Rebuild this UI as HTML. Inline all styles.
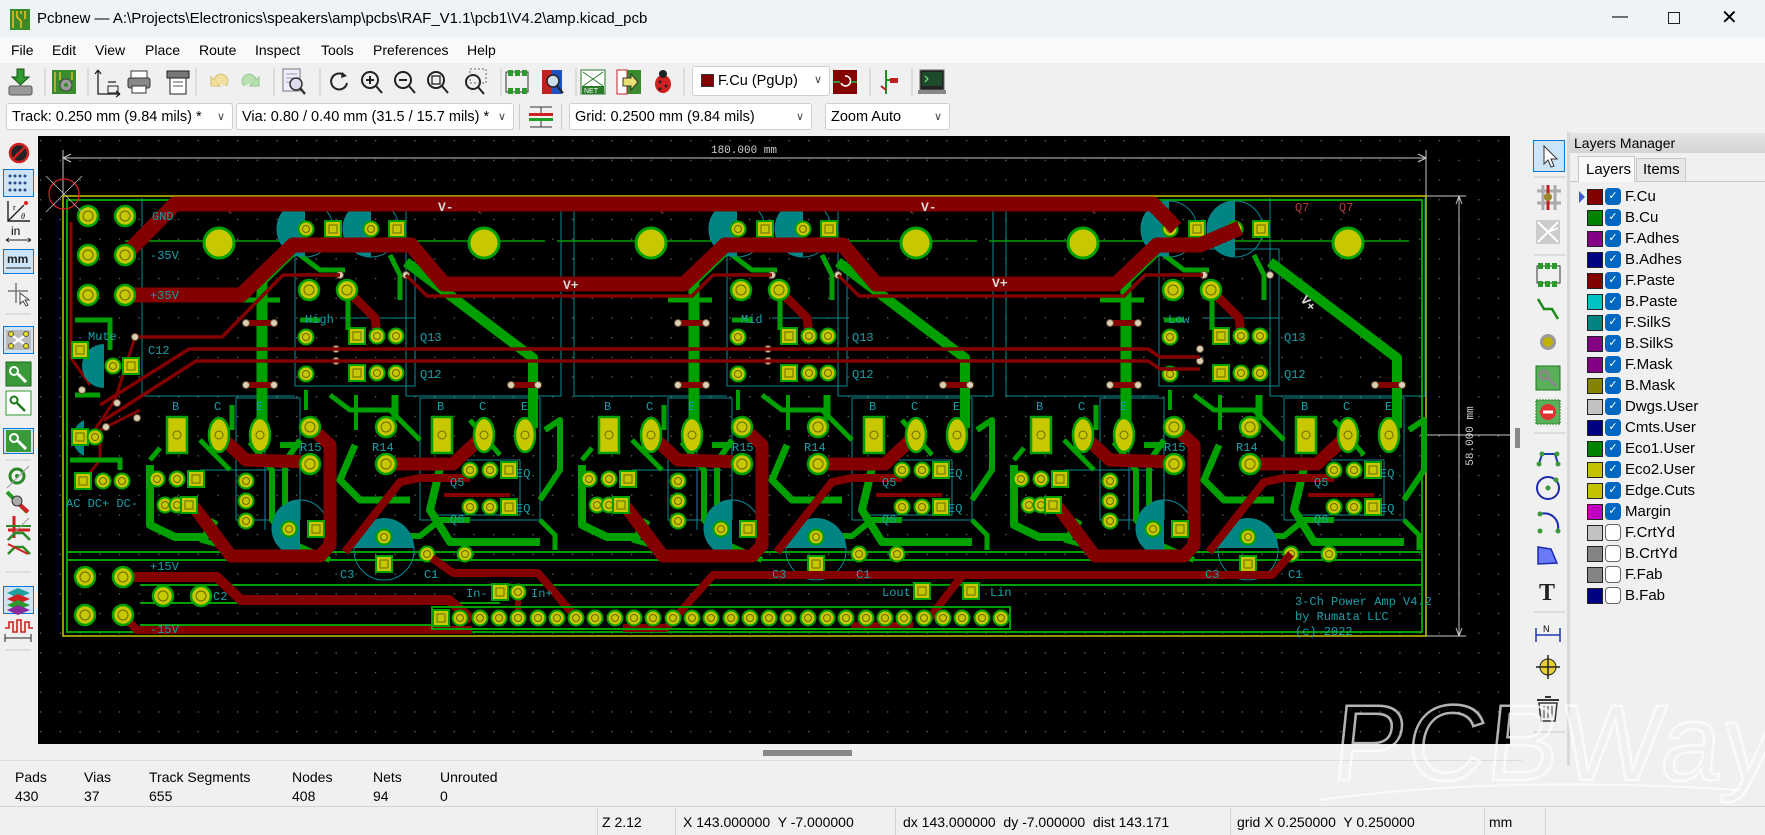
<!DOCTYPE html>
<html><head><meta charset="utf-8"><style>
*{margin:0;padding:0;box-sizing:border-box}
body{width:1765px;height:835px;overflow:hidden;background:#f0f0f0;font-family:"Liberation Sans",sans-serif;font-size:14px;color:#000;position:relative}
.abs{position:absolute}
#title{left:0;top:0;width:1765px;height:38px;background:#eef3f8}
#menu{left:0;top:38px;width:1765px;height:25px;background:#f9f9f9}
#menu span{position:absolute;top:4px;font-size:14px}
.dd{position:absolute;top:103px;height:27px;background:#fff;border:1px solid #cfcfcf;border-radius:3px;font-size:14.5px;padding:5px 0 0 5px;white-space:nowrap}
.dd i{position:absolute;right:7px;top:6px;font-style:normal;font-size:11px;color:#444}
.lyr{position:absolute;left:1578px;height:20px;width:180px;font-size:15px}
.lyr b{position:absolute;left:9px;top:2px;width:16px;height:16px;border:1px solid #222}
.lyr u{position:absolute;left:27px;top:1px;width:16px;height:17px;border-radius:4px;background:#0067c0;text-decoration:none;color:#fff;font-size:11px;text-align:center;line-height:17px}
.lyr u.off{background:#fff;border:1px solid #666}
.lyr span{position:absolute;left:47px;top:1px}
.st{position:absolute;font-size:14px}
</style></head><body>

<div id="title" class="abs">
 <svg class="abs" style="left:10px;top:9px" width="20" height="21"><rect width="20" height="21" fill="#3b8a2a"/><path d="M3 2v17M7 2v6l4 4v7M15 2v8M11 2v3" stroke="#e8c020" stroke-width="1.6" fill="none"/></svg>
 <div class="abs" style="left:37px;top:10px;font-size:15px">Pcbnew — A:\Projects\Electronics\speakers\amp\pcbs\RAF_V1.1\pcb1\V4.2\amp.kicad_pcb</div>
 <div class="abs" style="left:1612px;top:8px;font-size:16px">&#8212;</div>
 <div class="abs" style="left:1668px;top:12px;width:12px;height:12px;border:1.3px solid #222"></div>
 <div class="abs" style="left:1721px;top:5px;font-size:20px">&#10005;</div>
</div>
<div id="menu" class="abs">
 <span style="left:11px">File</span><span style="left:52px">Edit</span><span style="left:95px">View</span><span style="left:145px">Place</span><span style="left:199px">Route</span><span style="left:255px">Inspect</span><span style="left:321px">Tools</span><span style="left:373px">Preferences</span><span style="left:467px">Help</span>
</div>

<svg class="abs" style="left:0;top:63px" width="960" height="38" viewBox="0 63 960 38">
 <g stroke="#c8c8c8" stroke-width="1"><path d="M45 68v28M88 68v28M196 68v28M274 68v28M320 68v28M501 68v28M576 68v28M684 68v28M870 68v28M912 68v28"/></g>
 <rect x="9" y="86" width="23" height="9" rx="2" fill="#9a9a9a" stroke="#555"/><path d="M17 69h7v8h5l-8.5 8-8.5-8h5z" fill="#2f9a2f" stroke="#145214"/>
 <rect x="52" y="70" width="24" height="24" fill="#3a8a2e"/><path d="M55 72v20M60 72v8M72 72v8" stroke="#e0c030" stroke-width="1.4"/><circle cx="66" cy="85" r="6" fill="#9a9a9a" stroke="#444"/><circle cx="66" cy="85" r="2" fill="#3a8a2e"/>
 <path d="M98 70v24h22M98 70l-3 4M98 70l3 4M120 94l-4-3M120 94l-4 3M108 82h8" stroke="#222" fill="none" stroke-width="1.3"/><rect x="108" y="86" width="10" height="7" fill="none" stroke="#222"/>
 <rect x="131" y="71" width="16" height="8" fill="#fff" stroke="#333"/><rect x="128" y="78" width="22" height="10" rx="2" fill="#888" stroke="#333"/><rect x="132" y="86" width="14" height="7" fill="#fff" stroke="#333"/>
 <rect x="167" y="71" width="22" height="7" fill="#777" stroke="#222"/><rect x="170" y="78" width="16" height="16" fill="#fff" stroke="#222"/><path d="M173 82h10M173 86h10" stroke="#555"/>
 <path d="M226 86a7 7 0 1 0-12-6l-3-3v9h9l-3-3" fill="#f0e0a0" stroke="#d8c070"/>
 <path d="M244 86a7 7 0 1 1 12-6l3-3v9h-9l3-3" fill="#b8e0b0" stroke="#90c890"/>
 <rect x="283" y="69" width="17" height="22" fill="#eef" stroke="#777"/><path d="M286 74h11M286 78h11M286 82h8" stroke="#99a"/><circle cx="296" cy="84" r="6" fill="#dde" stroke="#333" stroke-width="1.5"/><path d="M300 88l5 6" stroke="#333" stroke-width="2.5"/>
 <path d="M345 76a8 8 0 1 0 2 7" fill="none" stroke="#222" stroke-width="2"/><path d="M342 72l5 4-6 2z" fill="#222"/>
 <g fill="none" stroke="#222" stroke-width="2"><circle cx="370" cy="80" r="8"/><path d="M376 86l6 7M366 80h8M370 76v8"/><circle cx="403" cy="80" r="8"/><path d="M409 86l6 7M399 80h8"/><circle cx="436" cy="80" r="8"/><path d="M442 86l6 7"/><rect x="432" y="76" width="8" height="8" stroke-width="1.3"/><circle cx="473" cy="82" r="7"/><path d="M478 87l6 7"/></g>
 <rect x="470" y="69" width="16" height="14" fill="none" stroke="#666" stroke-dasharray="2 2"/>
 <rect x="506" y="72" width="22" height="20" fill="none" stroke="#333"/><g fill="#2a9a2a"><rect x="508" y="70" width="5" height="6"/><rect x="515" y="70" width="5" height="6"/><rect x="522" y="70" width="5" height="6"/><rect x="508" y="88" width="5" height="6"/><rect x="515" y="88" width="5" height="6"/><rect x="522" y="88" width="5" height="6"/></g>
 <rect x="542" y="70" width="10" height="24" fill="#c02020"/><rect x="552" y="70" width="10" height="24" fill="#2050c0"/><circle cx="553" cy="81" r="6" fill="#cde" stroke="#222" stroke-width="1.5"/><path d="M557 86l6 7" stroke="#222" stroke-width="2"/>
 <rect x="581" y="70" width="24" height="24" fill="#fff" stroke="#2a7a2a"/><path d="M583 72l20 14M603 72l-20 14" stroke="#2a7a2a"/><rect x="582" y="86" width="22" height="8" fill="#2a7a2a"/><text x="584" y="93" font-size="7" fill="#fff" font-family="Liberation Sans">NET</text>
 <rect x="617" y="70" width="24" height="24" fill="#3a8a2e"/><rect x="617" y="70" width="10" height="24" fill="#fff" stroke="#c02020"/><path d="M623 78h8v-4l7 8-7 8v-4h-8z" fill="#e8e070" stroke="#333"/>
 <ellipse cx="663" cy="84" rx="8" ry="9" fill="#d02020"/><circle cx="663" cy="74" r="4" fill="#222"/><g fill="#222"><circle cx="660" cy="82" r="1.5"/><circle cx="666" cy="86" r="1.5"/><circle cx="660" cy="89" r="1.5"/></g>
 <rect x="833" y="70" width="24" height="24" fill="#840000"/><path d="M845 76a5 5 0 1 1-4 7" fill="none" stroke="#fff" stroke-width="1.6"/><path d="M833 82h7M851 82h6" stroke="#2a9a2a" stroke-width="2"/>
 <path d="M886 70v24M886 80h10" stroke="#2a8a2a" stroke-width="2"/><rect x="890" y="78" width="8" height="5" fill="#c02020"/><path d="M881 86l5 4" stroke="#c02020" stroke-width="2"/>
 <rect x="920" y="70" width="24" height="20" fill="#222" stroke="#666"/><rect x="922" y="72" width="20" height="14" fill="#1d4a2a"/><path d="M925 76l3 3-3 3" stroke="#8f8" fill="none"/><rect x="918" y="90" width="28" height="4" fill="#888"/>
</svg>
<div class="dd" style="left:692px;top:66px;width:138px;height:30px;padding-top:6px"><span style="display:inline-block;width:13px;height:13px;background:#840000;border:1px solid #333;vertical-align:-2px;margin:0 4px 0 3px"></span>F.Cu (PgUp)<i>&#8744;</i></div>

<div class="dd" style="left:6px;width:227px">Track: 0.250 mm (9.84 mils) *<i>&#8744;</i></div>
<div class="dd" style="left:236px;width:278px">Via: 0.80 / 0.40 mm (31.5 / 15.7 mils) *<i>&#8744;</i></div>
<svg class="abs" style="left:526px;top:103px" width="30" height="28"><path d="M4 4h22M4 24h22M15 4v6M15 18v6" stroke="#333"/><rect x="3" y="10" width="24" height="3" fill="#d02020"/><rect x="3" y="15" width="24" height="3" fill="#20a020"/></svg>
<div class="dd" style="left:569px;width:243px">Grid: 0.2500 mm (9.84 mils)<i>&#8744;</i></div>
<div class="dd" style="left:825px;width:125px">Zoom Auto<i>&#8744;</i></div>
<div class="abs" style="left:519px;top:104px;width:1px;height:26px;background:#ccc"></div>
<div class="abs" style="left:561px;top:104px;width:1px;height:26px;background:#ccc"></div>

<svg class="abs" style="left:0;top:136px" width="38" height="600" viewBox="0 136 38 600">
 <g fill="#cce4f7" stroke="#0078d7"><rect x="3.5" y="169.5" width="30" height="27"/><rect x="3.5" y="249.5" width="30" height="24"/><rect x="3.5" y="326.5" width="30" height="27"/><rect x="3.5" y="428.5" width="30" height="25"/><rect x="3.5" y="586.5" width="30" height="27"/></g>
 <ellipse cx="19" cy="153" rx="9" ry="8" fill="#222"/><circle cx="19" cy="153" r="9" fill="none" stroke="#d02020" stroke-width="2.5"/><path d="M12 160l14-14" stroke="#d02020" stroke-width="2.5"/>
 <g fill="#2a4a8a"><circle cx="10" cy="176" r="1.5"/><circle cx="15" cy="176" r="1.5"/><circle cx="20" cy="176" r="1.5"/><circle cx="25" cy="176" r="1.5"/><circle cx="10" cy="183" r="1.5"/><circle cx="15" cy="183" r="1.5"/><circle cx="20" cy="183" r="1.5"/><circle cx="25" cy="183" r="1.5"/><circle cx="10" cy="190" r="1.5"/><circle cx="15" cy="190" r="1.5"/><circle cx="20" cy="190" r="1.5"/><circle cx="25" cy="190" r="1.5"/></g>
 <path d="M8 201v20h22M8 221l16-16" stroke="#222" fill="none" stroke-width="1.4"/><circle cx="26" cy="203" r="2" fill="#e02020"/><text x="13" y="210" font-size="8" font-family="Liberation Serif">r</text><text x="21" y="219" font-size="8" font-style="italic" font-family="Liberation Serif">θ</text>
 <text x="11" y="235" font-size="12" font-family="Liberation Sans">in</text><path d="M6 240h25M6 240l3-2M6 240l3 2M31 240l-3-2M31 240l-3 2" stroke="#222"/>
 <text x="7" y="263" font-size="12" font-weight="bold" font-family="Liberation Sans" fill="#222">mm</text><path d="M6 268h25" stroke="#222"/>
 <path d="M16 283v20M8 291h20" stroke="#777" stroke-width="1.5"/><path d="M20 293v11l3-3 3 5 2-1-3-5h4z" fill="#fff" stroke="#444"/>
 <path d="M6 314h25" stroke="#ccc"/>
 <rect x="6" y="330" width="25" height="20" fill="#bbb"/><path d="M10 334l17 12M27 334l-17 12" stroke="#fff" stroke-width="2"/><g fill="#e8e020" stroke="#555"><circle cx="11" cy="334" r="2.5"/><circle cx="26" cy="334" r="2.5"/><circle cx="11" cy="346" r="2.5"/><circle cx="26" cy="346" r="2.5"/></g>
 <path d="M6 362h25" stroke="#ccc"/>
 <rect x="6" y="362" width="25" height="24" fill="#3a9a3a" stroke="#1a6a1a"/><circle cx="14" cy="371" r="4" fill="none" stroke="#fff" stroke-width="2"/><path d="M18 374l8 8" stroke="#fff" stroke-width="3"/>
 <rect x="6" y="391" width="25" height="24" fill="#fff" stroke="#2a9a2a"/><circle cx="14" cy="400" r="3.5" fill="none" stroke="#1a7a1a" stroke-width="2"/><path d="M17 403l8 8" stroke="#1a7a1a" stroke-width="2.5"/>
 <rect x="6" y="430" width="25" height="22" fill="#3a9a3a"/><circle cx="14" cy="438" r="4" fill="none" stroke="#fff" stroke-width="2"/><path d="M18 441l8 8" stroke="#fff" stroke-width="3"/>
 <path d="M6 460h25" stroke="#ccc"/>
 <circle cx="17" cy="476" r="7" fill="none" stroke="#2a8a2a" stroke-width="3"/><circle cx="17" cy="476" r="2" fill="#2a8a2a"/><path d="M7 488l22-22" stroke="#999"/>
 <path d="M7 492l20 20" stroke="#2a9a2a" stroke-width="4"/><path d="M18 503l10 9" stroke="#d02020" stroke-width="4"/><circle cx="17" cy="501" r="5" fill="#aaa" stroke="#333"/>
 <path d="M14 516v22M8 530h22" stroke="#d02020" stroke-width="3"/><path d="M6 526h25" stroke="#2a8a2a" stroke-width="2"/><path d="M7 540l22-22" stroke="#999"/>
 <path d="M8 540l7-7h8l7 7M8 554l7-7h8l7 7" stroke="#2a8a2a" stroke-width="2.5" fill="none"/><path d="M8 544l20 10" stroke="#d02020" stroke-width="2"/>
 <path d="M6 572h25" stroke="#ccc"/>
 <path d="M7 593l11-5 12 5-12 5z" fill="#20a0a0"/><path d="M7 599l11-5 12 5-12 5z" fill="#d02020"/><path d="M7 605l11-5 12 5-12 5z" fill="#2a9a2a"/><path d="M7 610l11-5 12 5-12 5z" fill="#8a2a9a"/>
 <path d="M5 628h4v-6h4v10h4v-12h4v12h4v-10h4v6h4" stroke="#d02020" fill="none" stroke-width="1.6"/><path d="M5 638h26M5 634v8M31 634v8" stroke="#222"/>
 <path d="M6 650h25" stroke="#ccc"/>
</svg>

<svg class="abs" style="left:38px;top:136px" width="1472" height="608" viewBox="38 136 1472 608" font-family="Liberation Mono,monospace">
 <defs>
  <pattern id="gd" x="40" y="140" width="19.7" height="19.7" patternUnits="userSpaceOnUse"><rect width="1.3" height="1.3" fill="#6a6a6a"/></pattern>
  <g id="p"><circle r="10" fill="#c8c800" stroke="#00a000" stroke-width="2.5"/><circle r="5" fill="none" stroke="#6a6a00" stroke-width="1"/></g>
  <g id="ps"><circle r="7.5" fill="#c8c800" stroke="#00a000" stroke-width="2"/><circle r="3.5" fill="none" stroke="#6a6a00" stroke-width="1"/></g>
  <g id="sq"><rect x="-8" y="-8" width="16" height="16" fill="#c8c800" stroke="#00a000" stroke-width="2"/><rect x="-4" y="-4" width="8" height="8" fill="none" stroke="#6a6a00"/></g>
  <g id="big"><circle r="15" fill="#c8c800" stroke="#00a000" stroke-width="3"/></g>
  <g id="ov"><ellipse rx="10" ry="17" fill="#c8c800" stroke="#00a000" stroke-width="2.5"/><circle r="4" fill="none" stroke="#6a6a00"/></g>
  <g id="bsq"><rect x="-10" y="-18" width="20" height="36" fill="#c8c800" stroke="#00a000" stroke-width="2.5"/><circle r="4" fill="none" stroke="#6a6a00"/></g>
  <g id="via"><circle r="3.5" fill="#d8d0b8" stroke="#705030"/></g>
  <g id="ch">
   <g fill="none" stroke="#0b8c96" stroke-width="1"><path d="M142,198V396H295M406,198V396H561V198M295,249H415V386H295ZM340,318H415V386M236,398H300V520H236ZM265,398V530M420,398H540V520H420ZM200,470H290M430,460H520V515H430"/><circle cx="305" cy="229" r="28"/><circle cx="371" cy="229" r="28"/><circle cx="300" cy="528" r="28"/><circle cx="384" cy="550" r="30"/></g>
   <g fill="none" stroke="#00a000" stroke-linejoin="round">
    <path d="M293,250L262,280V428" stroke-width="11"/>
    <path d="M406,262L533,358V428" stroke-width="10"/>
    <path d="M300,440L285,462V540L330,560" stroke-width="6"/>
    <path d="M150,465V525L175,537H205L215,520" stroke-width="8"/>
    <path d="M440,468L430,510L450,542H540" stroke-width="8"/>
    <path d="M250,442L272,470V520L292,540" stroke-width="6"/>
    <path d="M395,395V420M355,445L340,480L360,500L410,500" stroke-width="7"/>
    <path d="M280,445H300M545,430L560,420L560,470L540,500" stroke-width="6"/>
    <path d="M400,536L420,536L440,520H470" stroke-width="6"/>
    <path d="M236,300H280M348,300V330M232,405V430M300,320H320" stroke-width="5"/>
    <path d="M125,241H545" stroke-width="1.5"/>
    <path d="M300,255L320,270L345,270M390,255L400,275V300M160,448L150,460M200,440L230,470M330,395L350,410H390L420,440M470,420L500,455M540,520L555,535V550M200,540L230,548" stroke-width="5"/>
    <path d="M356,395V430M306,390V410" stroke-width="4"/>
   </g>
   <g fill="#008484"><path d="M305,201A28,28 0 0 0 305,257Z"/><path d="M371,201A28,28 0 0 0 371,257Z"/><path d="M300,500A28,28 0 0 0 300,556Z"/><path d="M354,548A30,30 0 0 1 414,548Z"/></g>
   <g fill="none" stroke="#840000" stroke-linejoin="round">
    <path d="M219,435L246,460L310,462" stroke-width="13"/>
    <path d="M310,427L330,445V545L320,556H231L194,507" stroke-width="13"/>
    <path d="M386,464H453L484,435" stroke-width="13"/>
    <path d="M470,478H420L400,482L345,552" stroke-width="8"/>
    <path d="M347,290L375,318L377,336" stroke-width="9"/>
    <path d="M246,323H274M246,385H274M511,385H538" stroke-width="6"/>
    <path d="M444,495H510" stroke-width="4"/>
   </g>
   <use href="#ps" x="306" y="229"/><use href="#sq" x="333" y="229"/><use href="#ps" x="371" y="229"/><use href="#sq" x="397" y="229"/>
   <use href="#p" x="309" y="290"/><use href="#p" x="347" y="290"/>
   <use href="#sq" x="357" y="336"/><use href="#ps" x="377" y="336"/><use href="#ps" x="396" y="336"/>
   <use href="#sq" x="357" y="373"/><use href="#ps" x="377" y="373"/><use href="#ps" x="396" y="373"/>
   <use href="#ps" x="306" y="337"/><use href="#ps" x="306" y="374"/>
   <use href="#bsq" x="177" y="435"/><use href="#ov" x="219" y="435"/><use href="#ov" x="260" y="435"/>
   <use href="#bsq" x="442" y="435"/><use href="#ov" x="484" y="435"/><use href="#ov" x="525" y="435"/>
   <use href="#p" x="310" y="427"/><use href="#p" x="310" y="464"/><use href="#p" x="386" y="427"/><use href="#p" x="386" y="464"/>
   <use href="#ps" x="157" y="479"/><use href="#ps" x="177" y="479"/><use href="#sq" x="196" y="479"/>
   <use href="#ps" x="165" y="505"/><use href="#ps" x="177" y="505"/><use href="#sq" x="189" y="505"/>
   <use href="#ps" x="246" y="481"/><use href="#ps" x="246" y="501"/><use href="#ps" x="246" y="521"/>
   <use href="#ps" x="470" y="470"/><use href="#ps" x="490" y="470"/><use href="#sq" x="509" y="470"/>
   <use href="#ps" x="470" y="507"/><use href="#ps" x="490" y="507"/><use href="#sq" x="509" y="507"/>
   <use href="#ps" x="289" y="529"/><use href="#sq" x="316" y="529"/><use href="#ps" x="384" y="537"/><use href="#sq" x="384" y="564"/>
   <use href="#ps" x="427" y="554"/><use href="#ps" x="465" y="554"/>
   <use href="#big" x="219" y="243"/><use href="#big" x="484" y="243"/>
   <use href="#via" x="246" y="323"/><use href="#via" x="274" y="323"/><use href="#via" x="246" y="385"/><use href="#via" x="274" y="385"/><use href="#via" x="511" y="385"/><use href="#via" x="538" y="385"/><use href="#via" x="340" y="275"/><use href="#via" x="406" y="275"/><use href="#via" x="336" y="349"/><use href="#via" x="336" y="361"/>
   <g fill="#1aa0aa" font-size="12"><text x="172" y="410">B</text><text x="214" y="410">C</text><text x="256" y="410">E</text><text x="437" y="410">B</text><text x="479" y="410">C</text><text x="521" y="410">E</text><text x="420" y="341">Q13</text><text x="420" y="378">Q12</text><text x="300" y="451">R15</text><text x="372" y="451">R14</text><text x="225" y="211" fill="#b04040">Q8</text><text x="475" y="211" fill="#b04040">Q7</text><text x="516" y="477">EQ</text><text x="516" y="512">EQ</text><text x="450" y="486">Q5</text><text x="450" y="523">Q6</text></g>
  </g>
 </defs>
 <rect x="38" y="136" width="1472" height="608" fill="#000"/>
 <rect x="38" y="136" width="1472" height="608" fill="url(#gd)"/>
 <g stroke="#c8c8c8" stroke-width="1" fill="none"><path d="M63,158H1426M63,150V196M1426,150V196M63,158l8-4M63,158l8,4M1426,158l-8-4M1426,158l-8,4M1426,196H1466M1426,636H1466M1459,196V636M1459,196l-3,8M1459,196l3,8M1459,636l-3-8M1459,636l3-8M1420,435H1510"/></g>
 <text x="744" y="153" fill="#d0d0d0" font-size="11" text-anchor="middle">180.000 mm</text>
 <text transform="translate(1473,436) rotate(-90)" fill="#d0d0d0" font-size="11" text-anchor="middle">58.000 mm</text>
 <rect x="63" y="196" width="1363" height="440" fill="none" stroke="#c8c800" stroke-width="1.5"/>
 <g fill="none" stroke="#00a000"><rect x="67" y="200" width="1355" height="432" stroke-width="2"/><path d="M67,552H1422M67,560H1422M140,585H1422M140,603H500M140,625H440" stroke-width="2"/></g>
 <use href="#ch"/><use href="#ch" x="432"/><use href="#ch" x="864"/>
 <g fill="none" stroke="#840000" stroke-linejoin="round">
  <path d="M125,255L175,204H1153L1176,228" stroke-width="15"/>
  <path d="M125,295H241L293,245H411L444,284H684L725,245H843L876,284H1116L1157,245H1200L1240,228" stroke-width="15"/>
  <path d="M100,405L189,349H1148L1160,357H1200" stroke-width="3.5"/>
  <path d="M104,420L196,361H1148L1160,369H1200" stroke-width="3.5"/>
  <path d="M135,337H222L283,275H340M406,275L427,296H692L713,275H772M838,275L859,296H1124L1145,275H1203" stroke-width="3.5"/>
  <path d="M71,222V358L90,385M88,440L115,400L135,337M84,480L100,460V430L140,410" stroke-width="3"/>
  <path d="M123,577H217L241,600H449L472,620" stroke-width="10"/>
  <path d="M123,615L137,630H472" stroke-width="8"/>
  <path d="M571,612L538,573H453L432,558" stroke-width="8"/>
  <path d="M623,628H666L713,575H1272L1291,554" stroke-width="8"/>
  <path d="M961,577L928,620M851,626H913" stroke-width="8"/>
  <path d="M518,592V612" stroke-width="6"/>
 </g>
 <g font-size="13" font-weight="bold"><text x="438" y="211" fill="#d8d8d8">V-</text><text x="921" y="211" fill="#d8d8d8">V-</text><text x="563" y="289" fill="#d8d8d8">V+</text><text x="992" y="287" fill="#d8d8d8">V+</text><text transform="translate(1300,300) rotate(50)" fill="#d8d8d8">V+</text></g>
 <g fill="#008484"><path d="M104,344A22,22 0 0 0 104,388Z"/><path d="M84,420A20,20 0 0 0 84,456Z"/></g>
 <g fill="none" stroke="#00a000" stroke-width="5"><path d="M75,320H110V350M70,460H120V470M75,395H100"/></g>
 <use href="#p" x="88" y="216"/><use href="#p" x="125" y="216"/><use href="#p" x="88" y="255"/><use href="#p" x="125" y="255"/><use href="#p" x="88" y="295"/><use href="#p" x="125" y="295"/>
 <use href="#sq" x="80" y="350"/><use href="#ps" x="113" y="366"/><use href="#sq" x="131" y="366"/>
 <use href="#sq" x="80" y="437"/><use href="#ps" x="95" y="437"/>
 <use href="#sq" x="83" y="481"/><use href="#ps" x="103" y="481"/><use href="#ps" x="122" y="481"/>
 <use href="#p" x="85" y="577"/><use href="#p" x="123" y="577"/><use href="#p" x="163" y="596"/><use href="#p" x="201" y="596"/><use href="#p" x="85" y="615"/><use href="#p" x="123" y="615"/>
 <use href="#via" x="135" y="337"/><use href="#via" x="82" y="390"/><use href="#via" x="117" y="403"/><use href="#via" x="106" y="427"/><use href="#via" x="137" y="418"/>
 <rect x="432" y="607" width="578" height="22" fill="none" stroke="#00a000" stroke-width="2"/>
 <g>
  <use href="#sq" x="441" y="618"/><use href="#ps" x="460" y="618"/><use href="#ps" x="480" y="618"/><use href="#ps" x="499" y="618"/><use href="#ps" x="518" y="618"/><use href="#ps" x="538" y="618"/><use href="#ps" x="557" y="618"/><use href="#ps" x="576" y="618"/><use href="#ps" x="595" y="618"/><use href="#ps" x="615" y="618"/><use href="#ps" x="634" y="618"/><use href="#ps" x="653" y="618"/><use href="#ps" x="673" y="618"/><use href="#ps" x="692" y="618"/><use href="#ps" x="711" y="618"/><use href="#ps" x="731" y="618"/><use href="#ps" x="750" y="618"/><use href="#ps" x="769" y="618"/><use href="#ps" x="788" y="618"/><use href="#ps" x="808" y="618"/><use href="#ps" x="827" y="618"/><use href="#ps" x="846" y="618"/><use href="#ps" x="866" y="618"/><use href="#ps" x="885" y="618"/><use href="#ps" x="904" y="618"/><use href="#ps" x="924" y="618"/><use href="#ps" x="943" y="618"/><use href="#ps" x="962" y="618"/><use href="#ps" x="982" y="618"/><use href="#ps" x="1001" y="618"/>
 </g>
 <use href="#sq" x="500" y="592"/><use href="#ps" x="518" y="592"/><use href="#sq" x="922" y="591"/><use href="#sq" x="971" y="591"/>
 <g fill="#1aa0aa" font-size="12"><text x="152" y="220">GND</text><text x="150" y="259">-35V</text><text x="150" y="299">+35V</text><text x="88" y="340">Mute</text><text x="148" y="354">C12</text><text x="66" y="507">AC DC+ DC-</text><text x="150" y="570">+15V</text><text x="213" y="600">C2</text><text x="150" y="633">-15V</text><text x="340" y="578">C3</text><text x="424" y="578">C1</text><text x="466" y="597">In-</text><text x="531" y="597">In+</text><text x="882" y="596">Lout</text><text x="990" y="596">Lin</text><text x="305" y="323">High</text><text x="741" y="323">Mid</text><text x="1168" y="323">Low</text><text x="772" y="578">C3</text><text x="856" y="578">C1</text><text x="1205" y="578">C3</text><text x="1288" y="578">C1</text><text x="1295" y="605">3-Ch Power Amp V4.2</text><text x="1295" y="620">by Rumata LLC</text><text x="1295" y="635">(c) 2022</text><text x="1295" y="211" fill="#b04040">Q7</text></g>
 <circle cx="64" cy="194" r="15" fill="none" stroke="#d02020" stroke-width="1.3"/><path d="M46,176L82,212M82,176L46,212" stroke="#c0c0c0" stroke-width="0.8"/>
</svg>

<div class="abs" style="left:1515px;top:428px;width:5px;height:20px;background:#888"></div>
<div class="abs" style="left:763px;top:750px;width:89px;height:6px;background:#888"></div>

<svg class="abs" style="left:1522px;top:132px" width="48" height="634" viewBox="1522 132 48 634">
 <rect x="1522" y="132" width="48" height="634" fill="#f0f0f0"/>
 <rect x="1533.5" y="140.5" width="31" height="31" fill="#cce4f7" stroke="#0078d7"/>
 <path d="M1544 146v18l4-4 3 7 3-1-3-7h6z" fill="#fff" stroke="#333"/>
 <path d="M1534 177h31M1534 255h31M1534 433h31M1534 612h31M1534 732h31" stroke="#c8c8c8"/>
 <path d="M1537 191h24M1537 203h24M1543 185v25M1555 185v25" stroke="#aaa" stroke-width="3"/><path d="M1548 185v25" stroke="#c02020" stroke-width="3"/><circle cx="1548" cy="197" r="4" fill="#a08830"/>
 <rect x="1536" y="220" width="24" height="24" fill="#ccc"/><path d="M1538 222l20 20M1558 222l-20 20M1548 232l10-4" stroke="#fff" stroke-width="2"/>
 <rect x="1537" y="266" width="23" height="17" fill="none" stroke="#333"/><g fill="#2a9a2a"><rect x="1538" y="263" width="5" height="6"/><rect x="1545" y="263" width="5" height="6"/><rect x="1552" y="263" width="5" height="6"/><rect x="1538" y="281" width="5" height="6"/><rect x="1545" y="281" width="5" height="6"/><rect x="1552" y="281" width="5" height="6"/></g>
 <path d="M1538 299l6 10h8l6 10" stroke="#1a8a1a" stroke-width="2.5" fill="none"/>
 <circle cx="1548" cy="342" r="8" fill="#999"/><circle cx="1548" cy="342" r="5" fill="#c0b000"/>
 <rect x="1536" y="366" width="24" height="24" fill="#5ab05a" stroke="#1a7a1a"/><circle cx="1544" cy="375" r="4" fill="none" stroke="#888" stroke-width="3"/><path d="M1548 378l8 8" stroke="#888" stroke-width="3"/>
 <rect x="1536" y="400" width="24" height="24" fill="#5ab05a" stroke="#1a7a1a" stroke-dasharray="2 1"/><circle cx="1548" cy="412" r="8" fill="#e03030"/><path d="M1543 412h10" stroke="#fff" stroke-width="3"/>
 <path d="M1539 464l3-10 13 0 3 10" stroke="#1a3ab0" stroke-width="2" fill="none"/><g fill="#3a9a3a"><circle cx="1539" cy="464" r="2.5"/><circle cx="1542" cy="454" r="2.5"/><circle cx="1557" cy="454" r="2.5"/><circle cx="1558" cy="464" r="2.5"/></g>
 <circle cx="1548" cy="488" r="11" fill="none" stroke="#1a2ab0" stroke-width="2"/><circle cx="1548" cy="488" r="2.5" fill="#3a9a3a"/><circle cx="1556" cy="480" r="2.5" fill="#3a9a3a"/>
 <path d="M1540 514a14 14 0 0 1 18 16" stroke="#1a2ab0" stroke-width="2" fill="none"/><g fill="#3a9a3a"><circle cx="1540" cy="514" r="2.5"/><circle cx="1558" cy="531" r="2.5"/><circle cx="1540" cy="531" r="2.5"/></g>
 <path d="M1538 547l13 2 6 14-19 1z" fill="#6a7af8" stroke="#1a2ab0" stroke-width="1.5"/>
 <text x="1539" y="600" font-size="24" font-weight="bold" font-family="Liberation Serif" fill="#222">T</text>
 <path d="M1536 635h24M1536 628v14M1560 628v14" stroke="#1a3ab0" stroke-width="1.5"/><text x="1543" y="632" font-size="9" font-family="Liberation Sans">N</text>
 <circle cx="1548" cy="667" r="8" fill="#e8d030" stroke="#222"/><path d="M1536 667h24M1548 655v24" stroke="#222" stroke-width="1.5"/>
 <path d="M1537 700h22M1545 697h6" stroke="#333" stroke-width="2"/><path d="M1539 703l2 18h14l2-18z" fill="none" stroke="#333" stroke-width="1.5"/><path d="M1544 706v12M1548 706v12M1552 706v12" stroke="#333"/>
</svg>

<div class="abs" style="left:1567px;top:132px;width:198px;height:634px;background:#f0f0f0;border-left:3px solid #d8d8d8"></div>
<div class="abs" style="left:1570px;top:133px;width:195px;height:20px;background:linear-gradient(#e4e4e4,#d4d4d4);font-size:14px;padding:2px 0 0 4px">Layers Manager</div>
<div class="abs" style="left:1570px;top:181px;width:195px;height:1px;background:#c8c8c8"></div>
<div class="abs" style="left:1578px;top:156px;width:57px;height:26px;background:#f9f9f9;border:1px solid #c8c8c8;border-bottom:none;font-size:15px;padding:4px 0 0 7px">Layers</div>
<div class="abs" style="left:1636px;top:158px;width:50px;height:23px;background:#e8e8e8;border:1px solid #c8c8c8;border-bottom:none;font-size:15px;padding:2px 0 0 6px">Items</div>
<div class="abs" style="left:1579px;top:191px;width:0;height:0;border-left:6px solid #4455ee;border-top:6px solid transparent;border-bottom:6px solid transparent"></div>
<div class="lyr" style="top:187px"><b style="background:#840000"></b><u>&#10003;</u><span>F.Cu</span></div>
<div class="lyr" style="top:208px"><b style="background:#008400"></b><u>&#10003;</u><span>B.Cu</span></div>
<div class="lyr" style="top:229px"><b style="background:#840084"></b><u>&#10003;</u><span>F.Adhes</span></div>
<div class="lyr" style="top:250px"><b style="background:#000084"></b><u>&#10003;</u><span>B.Adhes</span></div>
<div class="lyr" style="top:271px"><b style="background:#840000"></b><u>&#10003;</u><span>F.Paste</span></div>
<div class="lyr" style="top:292px"><b style="background:#00c2c2"></b><u>&#10003;</u><span>B.Paste</span></div>
<div class="lyr" style="top:313px"><b style="background:#008484"></b><u>&#10003;</u><span>F.SilkS</span></div>
<div class="lyr" style="top:334px"><b style="background:#840084"></b><u>&#10003;</u><span>B.SilkS</span></div>
<div class="lyr" style="top:355px"><b style="background:#840084"></b><u>&#10003;</u><span>F.Mask</span></div>
<div class="lyr" style="top:376px"><b style="background:#848400"></b><u>&#10003;</u><span>B.Mask</span></div>
<div class="lyr" style="top:397px"><b style="background:#c2c2c2"></b><u>&#10003;</u><span>Dwgs.User</span></div>
<div class="lyr" style="top:418px"><b style="background:#000084"></b><u>&#10003;</u><span>Cmts.User</span></div>
<div class="lyr" style="top:439px"><b style="background:#008400"></b><u>&#10003;</u><span>Eco1.User</span></div>
<div class="lyr" style="top:460px"><b style="background:#c2c200"></b><u>&#10003;</u><span>Eco2.User</span></div>
<div class="lyr" style="top:481px"><b style="background:#c2c200"></b><u>&#10003;</u><span>Edge.Cuts</span></div>
<div class="lyr" style="top:502px"><b style="background:#c200c2"></b><u>&#10003;</u><span>Margin</span></div>
<div class="lyr" style="top:523px"><b style="background:#c2c2c2"></b><u class="off"></u><span>F.CrtYd</span></div>
<div class="lyr" style="top:544px"><b style="background:#848484"></b><u class="off"></u><span>B.CrtYd</span></div>
<div class="lyr" style="top:565px"><b style="background:#848484"></b><u class="off"></u><span>F.Fab</span></div>
<div class="lyr" style="top:586px"><b style="background:#000084"></b><u class="off"></u><span>B.Fab</span></div>

<div class="abs" style="left:0;top:760px;width:1522px;height:1px;background:#dcdcdc"></div>
<div class="st" style="left:15px;top:769px">Pads</div><div class="st" style="left:15px;top:788px">430</div>
<div class="st" style="left:84px;top:769px">Vias</div><div class="st" style="left:84px;top:788px">37</div>
<div class="st" style="left:149px;top:769px">Track Segments</div><div class="st" style="left:149px;top:788px">655</div>
<div class="st" style="left:292px;top:769px">Nodes</div><div class="st" style="left:292px;top:788px">408</div>
<div class="st" style="left:373px;top:769px">Nets</div><div class="st" style="left:373px;top:788px">94</div>
<div class="st" style="left:440px;top:769px">Unrouted</div><div class="st" style="left:440px;top:788px">0</div>
<div class="abs" style="left:0;top:806px;width:1765px;height:1px;background:#d4d4d4"></div>
<div class="abs" style="left:597px;top:808px;width:1px;height:27px;background:#d4d4d4"></div>
<div class="abs" style="left:675px;top:808px;width:1px;height:27px;background:#d4d4d4"></div>
<div class="abs" style="left:895px;top:808px;width:1px;height:27px;background:#d4d4d4"></div>
<div class="abs" style="left:1230px;top:808px;width:1px;height:27px;background:#d4d4d4"></div>
<div class="abs" style="left:1484px;top:808px;width:1px;height:27px;background:#d4d4d4"></div>
<div class="abs" style="left:1545px;top:808px;width:1px;height:27px;background:#d4d4d4"></div>
<div class="st" style="left:602px;top:814px">Z 2.12</div>
<div class="st" style="left:683px;top:814px">X 143.000000&nbsp; Y -7.000000</div>
<div class="st" style="left:903px;top:814px">dx 143.000000&nbsp; dy -7.000000&nbsp; dist 143.171</div>
<div class="st" style="left:1237px;top:814px">grid X 0.250000&nbsp; Y 0.250000</div>
<div class="st" style="left:1489px;top:814px">mm</div>

<svg class="abs" style="left:0;top:0;pointer-events:none" width="1765" height="835"><text x="1330" y="780" font-family="Liberation Sans,sans-serif" font-size="108" fill="none" stroke="#ffffff" stroke-width="2.5" opacity="0.7" transform="skewX(-6) translate(82,0)" letter-spacing="2">PCBWay</text><path d="M1320 800Q1500 775 1740 790" stroke="#fff" stroke-width="2" fill="none" opacity="0.7"/></svg>
</body></html>
